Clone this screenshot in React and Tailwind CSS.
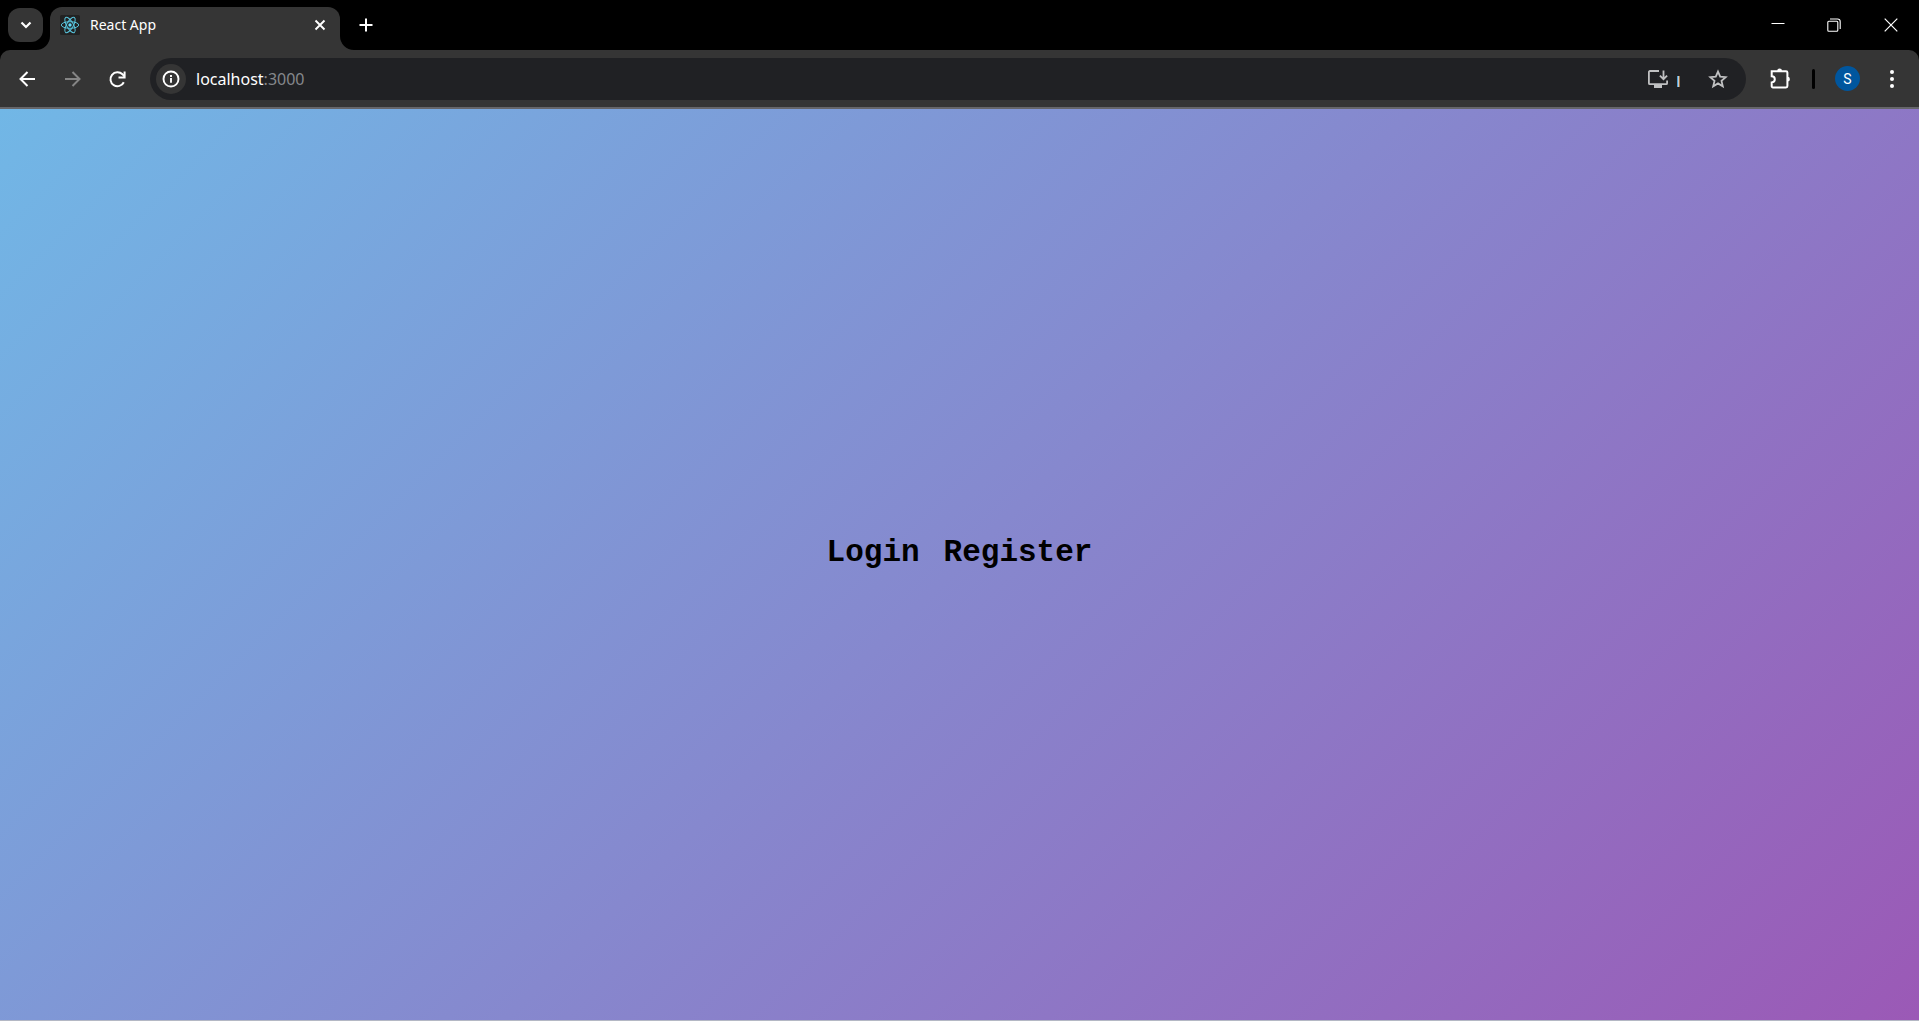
import React from "react";

function Icon({ size = 20, box = 20, width = 2, className = "", children }) {
  return (
    <svg
      width={size}
      height={size}
      viewBox={`0 0 ${box} ${box}`}
      fill="none"
      stroke="currentColor"
      strokeWidth={width}
      className={`block shrink-0 ${className}`}
      aria-hidden="true"
    >
      {children}
    </svg>
  );
}

function ReactLogo() {
  return (
    <svg width="20" height="20" viewBox="0 0 20 20" className="block shrink-0" aria-hidden="true">
      <rect width="20" height="20" rx="1.5" fill="#222222" />
      <g fill="none" stroke="#58c4dc" strokeWidth="1">
        <ellipse cx="10" cy="10" rx="8.7" ry="3.3" />
        <ellipse cx="10" cy="10" rx="8.7" ry="3.3" transform="rotate(60 10 10)" />
        <ellipse cx="10" cy="10" rx="8.7" ry="3.3" transform="rotate(120 10 10)" />
      </g>
      <circle cx="10" cy="10" r="1.7" fill="#61dafb" />
    </svg>
  );
}

function TabFlare({ side }) {
  return (
    <svg
      width="14"
      height="14"
      viewBox="0 0 14 14"
      className={side === "left" ? "absolute bottom-0 right-full" : "absolute bottom-0 left-full -scale-x-100"}
      aria-hidden="true"
    >
      <path d="M14 0A14 14 0 0 1 0 14H14Z" fill="#353535" />
    </svg>
  );
}

function TabStrip() {
  return (
    <header className="flex h-[50px] items-end bg-black text-white">
      <button
        aria-label="Search tabs"
        className="mb-2 ml-2 flex h-[34px] w-[35px] items-center justify-center rounded-xl bg-[#353535]"
      >
        <Icon size={12} box={12} width={2.2}>
          <path d="M1.5 3.5 6 8l4.5-4.5" />
        </Icon>
      </button>
      <div className="relative ml-[7px] flex h-[43px] w-[290px] items-center rounded-t-xl bg-[#353535] pb-[7px] pl-[10px] pr-3">
        <TabFlare side="left" />
        <ReactLogo />
        <span className="ml-[10px] flex-1 text-sm leading-5">React App</span>
        <button aria-label="Close tab" className="flex size-4 items-center justify-center">
          <Icon size={12} box={12} width={1.9}>
            <path d="M1.5 1.5l9 9M10.5 1.5l-9 9" />
          </Icon>
        </button>
        <TabFlare side="right" />
      </div>
      <button aria-label="New tab" className="mb-[15px] ml-4 flex size-5 items-center justify-center">
        <Icon size={14} box={14} width={2}>
          <path d="M7 0.5v13M0.5 7h13" />
        </Icon>
      </button>
      <div className="ml-auto flex h-full">
        <button aria-label="Minimize" className="flex w-14 items-center justify-center">
          <Icon size={14} box={14} width={1} className="mb-[2px]">
            <path d="M0.5 6.5h13" />
          </Icon>
        </button>
        <button aria-label="Restore" className="flex w-14 items-center justify-center">
          <Icon size={14} box={14} width={1.1}>
            <rect x="0.8" y="3.2" width="10" height="10" rx="1" />
            <path d="M3 1h7.5A2.7 2.7 0 0 1 13.2 3.7V11" />
          </Icon>
        </button>
        <button aria-label="Close" className="flex w-[57px] items-center justify-center">
          <Icon size={14} box={14} width={1.2}>
            <path d="M0.7 0.7l12.6 12.6M13.3 0.7L0.7 13.3" />
          </Icon>
        </button>
      </div>
    </header>
  );
}

function Toolbar() {
  return (
    <div className="bg-black">
      <nav className="flex h-[59px] items-center rounded-t-[10px] border-b-2 border-[#66666a] bg-[#353535] px-[17px] text-white">
        <button aria-label="Back" className="flex size-5 items-center justify-center">
          <Icon>
            <path d="M18 10H4M10.5 3l-7 7 7 7" />
          </Icon>
        </button>
        <button aria-label="Forward" disabled className="ml-[25px] flex size-5 items-center justify-center text-[#858585]">
          <Icon>
            <path d="M3 10h14M10.5 3l7 7-7 7" />
          </Icon>
        </button>
        <button aria-label="Reload" className="ml-[25px] flex size-5 items-center justify-center">
          <Icon>
            <path d="M16.8 13.2A7 7 0 1 1 15.5 5.3L17.5 7.4" />
            <path d="M17.6 2.5V8.5H11.5" />
          </Icon>
        </button>
        <div className="ml-[23px] flex h-[42px] min-w-0 flex-1 items-center rounded-full bg-[#202124] pl-[6px] pr-[18px]">
          <button
            aria-label="View site information"
            className="flex size-[30px] shrink-0 items-center justify-center rounded-full bg-[#353535]"
          >
            <Icon size={18} box={18} width={1.9}>
              <circle cx="9" cy="9" r="7.5" />
              <path d="M9 8v4.8M9 5v1.9" />
            </Icon>
          </button>
          <a href="#" className="ml-[10px] flex-1 text-base leading-6 text-white">
            localhost<span className="text-[#85888c]">:3000</span>
          </a>
          <button aria-label="Install app" className="flex items-end gap-[9px] text-[#c0c1c2]">
            <Icon size={20} box={20} width={1.8}>
              <path d="M11 2H1.9a1 1 0 0 0-1 1v11.2a1 1 0 0 0 1 1h16.2a1 1 0 0 0 1-1V11.5" />
              <path d="M15.5 1.5v8.2M11.9 6.6l3.6 3.6 3.6-3.6" />
              <path d="M6 15h8v4H6z" fill="currentColor" stroke="none" />
            </Icon>
            <span className="flex h-[13px]" aria-hidden="true">
              <span className="h-[11px] w-px bg-[#4aa0d8]" />
              <span className="h-[11px] w-px bg-[#c9ccd0]" />
              <span className="h-[11px] w-px bg-[#9a7040]" />
            </span>
          </button>
          <button aria-label="Bookmark this tab" className="ml-7 flex size-5 items-center justify-center text-[#c0c1c2]">
            <Icon width={1.8}>
              <path d="M10 2.6l2.2 5.1 5.5.5-4.2 3.7 1.3 5.4-4.8-2.9-4.8 2.9 1.3-5.4-4.2-3.7 5.5-.5Z" />
            </Icon>
          </button>
        </div>
        <button aria-label="Extensions" className="ml-6 flex size-[21px] items-center justify-center">
          <Icon size={21} box={21} width={2}>
            <path d="M2 3.2h14a1.4 1.4 0 0 1 1.4 1.4V18a1.4 1.4 0 0 1-1.4 1.4H2.9a1.2 1.2 0 0 1-1.2-1.2v-3.8a3.1 3.1 0 0 0 0-6.2V3.2Z" />
            <path d="M7.2 3a2.4 2.4 0 0 1 4.8 0ZM17.5 8.8a2.4 2.4 0 0 1 0 4.8Z" fill="currentColor" stroke="none" />
          </Icon>
        </button>
        <span className="ml-[21px] h-5 w-[3px] rounded-sm bg-black" />
        <button
          aria-label="Profile"
          className="ml-5 flex size-[25px] items-center justify-center rounded-full bg-[#00569e] font-[Roboto] text-sm leading-none"
        >
          S
        </button>
        <button aria-label="Menu" className="ml-[22px] flex size-5 items-center justify-center">
          <Icon>
            <g fill="currentColor" stroke="none">
              <circle cx="10" cy="3" r="2" />
              <circle cx="10" cy="10" r="2" />
              <circle cx="10" cy="17" r="2" />
            </g>
          </Icon>
        </button>
      </nav>
    </div>
  );
}

export default function App() {
  return (
    <div className="flex min-h-screen flex-col font-['Noto_Sans','Open_Sans',sans-serif]">
      <TabStrip />
      <Toolbar />
      <main className="flex flex-1 items-center justify-center gap-6 border-b border-[#b4b8c4] bg-[linear-gradient(135deg,#71b7e6,#9b59b6)] pb-6 font-['Liberation_Mono','Courier_New',monospace] text-[31px] font-bold leading-9 text-black">
        <a href="#login">Login</a>
        <a href="#register">Register</a>
      </main>
    </div>
  );
}
